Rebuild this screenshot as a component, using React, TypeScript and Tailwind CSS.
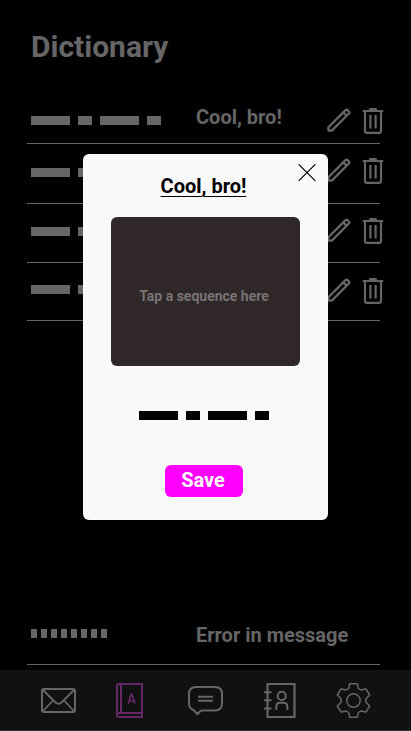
import type { ReactNode } from "react";

const DASH_DOT = [39, 14, 39, 14];

function Bars({ className, color }: { className?: string; color: string }) {
  return (
    <div className={`flex gap-2 ${className ?? ""}`}>
      {DASH_DOT.map((width, i) => (
        <span key={i} className={`h-[9px] shrink-0 ${color}`} style={{ width }} />
      ))}
    </div>
  );
}

function Pencil() {
  return (
    <svg width="24" height="24" viewBox="0 0 24 24" fill="none" stroke="#666" strokeWidth="2.3" strokeLinejoin="round">
      <path d="M1.4 22.6V19.2L18.5 2.1Q19.5 1.1 20.5 2.1L21.9 3.5Q22.9 4.5 21.9 5.5L4.8 22.6Z" />
      <path d="M16.2 4.4L19.6 7.8" />
    </svg>
  );
}

function Trash() {
  return (
    <svg width="22" height="26" viewBox="0 0 22 26" fill="none" stroke="#666" strokeWidth="2.2">
      <path d="M.8 3H21.2M3 3V22.8Q3 24.9 5 24.9H17Q19 24.9 19 22.8V3M8.4 7V20.5M13.6 7V20.5" />
      <path d="M7.5 2L8.5 1H13.5L14.5 2" />
    </svg>
  );
}

interface EntryProps {
  row: string;
  barsTop: string;
  iconsTop: string;
  label?: string;
}

function Entry({ row, barsTop, iconsTop, label }: EntryProps) {
  return (
    <li className={`flex items-start border-b border-[#666] pl-1 ${row}`}>
      <div className={`w-[165px] ${barsTop}`}>
        <Bars color="bg-[#666]" />
      </div>
      <span className="w-[131px] pt-[21px] text-xl leading-6 font-bold">{label}</span>
      <div className={`-mr-1 flex shrink-0 gap-[11px] ${iconsTop}`}>
        <Pencil />
        <Trash />
      </div>
    </li>
  );
}

function NavIcon({ children, className, width = 36 }: { children: ReactNode; className: string; width?: number }) {
  return (
    <button className={`block shrink-0 ${className}`}>
      <svg width={width} height="36" viewBox={`0 0 ${width} 36`} fill="none" stroke="currentColor" strokeWidth="2">
        {children}
      </svg>
    </button>
  );
}

function BottomNav() {
  return (
    <nav className="flex h-[61px] items-start border-b border-[#333] bg-[#111] pt-3 text-[#666]">
      <NavIcon className="ml-10">
        <rect x="2" y="7" width="33" height="23" rx="2" />
        <path d="M2.5 7.5L15.5 20.5Q18.5 23 21.5 20.5L34.5 7.5M2.5 29.5L13 18.5M34.5 29.5L24 18.5" strokeWidth="1.8" />
      </NavIcon>
      <NavIcon className="ml-[39px] text-[#652765]" width={30}>
        <path d="M27 2H4Q2 2 2 4V33Q2 35 4 35H27ZM27 31H4Q2 31 2 33M6 2V31" />
        <path d="M13.4 21.5L16.1 12.3H17.1L19.8 21.5M14.2 19H19" strokeWidth="1.7" />
      </NavIcon>
      <NavIcon className="ml-[42px]">
        <path d="M9 5H28Q35 5 35 12V21Q35 28.5 28 28.5H14L10.3 32L6.5 28Q2 26.5 2 21V12Q2 5 9 5Z" />
        <path d="M11 14.7H26M11 18.7H26" strokeWidth="1.9" />
      </NavIcon>
      <NavIcon className="ml-[40px]">
        <path d="M4.5 2H31.5V35H4.5Z" strokeWidth="2.2" />
        <path d="M1 10.3H8.5M1 18.3H8.5M1 26.5H8.5" />
        <circle cx="18.7" cy="13.9" r="4.1" />
        <path d="M13.3 28V24.7Q13.3 20.7 17 20.7H20.6Q24.3 20.7 24.3 24.7V28" />
      </NavIcon>
      <NavIcon className="ml-[36px]">
        <path
          d="M14.7 1.8H22.3L23.3 6.4Q24.6 7.2 25.8 8L30.9 6.9L34.7 13L30.9 16.7V20.3L34.7 24L30.9 30.1L25.8 29Q24.6 29.8 23.3 30.6L22.3 35.2H14.7L13.7 30.6Q12.4 29.8 11.2 29L6.1 30.1L2.3 24L6.1 20.3V16.7L2.3 13L6.1 6.9L11.2 8Q12.4 7.2 13.7 6.4Z"
          strokeWidth="1.5"
          strokeLinejoin="round"
        />
        <circle cx="18.5" cy="18.5" r="6.7" strokeWidth="1.5" />
      </NavIcon>
    </nav>
  );
}

function EntryDialog() {
  return (
    <div
      role="dialog"
      className="absolute top-[154px] left-[83px] flex h-[366px] w-[245px] flex-col items-center rounded-md bg-[#f9f9f9] text-black"
    >
      <button aria-label="Close" className="absolute top-[10px] right-3">
        <svg width="18" height="18" viewBox="0 0 18 18" stroke="#000" strokeWidth="1.1">
          <path d="M.7 .3L17.3 16.9M17.3 .3L.7 16.9" />
        </svg>
      </button>
      <h2 className="mt-5 mr-1 text-xl leading-6 font-bold underline decoration-1 underline-offset-[3px]">Cool, bro!</h2>
      <div className="mt-[19px] flex h-[149px] w-[189px] shrink-0 justify-center rounded-md bg-[#302728] pt-[71px] pr-[3px] text-sm leading-4 font-bold text-[#787475]">
        Tap a sequence here
      </div>
      <Bars className="mt-[45px] mr-[3px]" color="bg-black" />
      <button className="mt-[45px] mr-[3px] h-8 w-[78px] rounded-md bg-[#ff00ff] pr-0.5 pb-0.5 text-xl leading-[30px] font-bold text-white">
        Save
      </button>
    </div>
  );
}

export default function App() {
  return (
    <div className="relative flex h-[731px] w-[411px] flex-col overflow-hidden bg-black font-['Roboto',sans-serif] text-[#666]">
      <h1 className="h-[84px] pt-[29px] pl-[31px] text-[30px] leading-[35px] font-bold">Dictionary</h1>
      <ul className="ml-[27px] w-[353px]">
        <Entry row="h-[60px]" barsTop="pt-8" iconsTop="pt-6" label="Cool, bro!" />
        <Entry row="h-[60px]" barsTop="pt-6" iconsTop="pt-[14px]" />
        <Entry row="h-[59px]" barsTop="pt-[23px]" iconsTop="pt-[14px]" />
        <Entry row="h-[58px]" barsTop="pt-[22px]" iconsTop="pt-[15px]" />
      </ul>
      <div className="mt-auto mb-[5px] ml-[27px] flex h-[60px] w-[353px] items-start border-b border-[#666] pl-1">
        <div className="flex w-[165px] shrink-0 gap-1 pt-6">
          {Array.from({ length: 8 }, (_, i) => (
            <span key={i} className="h-[9px] w-1.5 bg-[#666]" />
          ))}
        </div>
        <span className="pt-[18px] text-xl leading-6 font-bold whitespace-nowrap">Error in message</span>
      </div>
      <BottomNav />
      <EntryDialog />
    </div>
  );
}
